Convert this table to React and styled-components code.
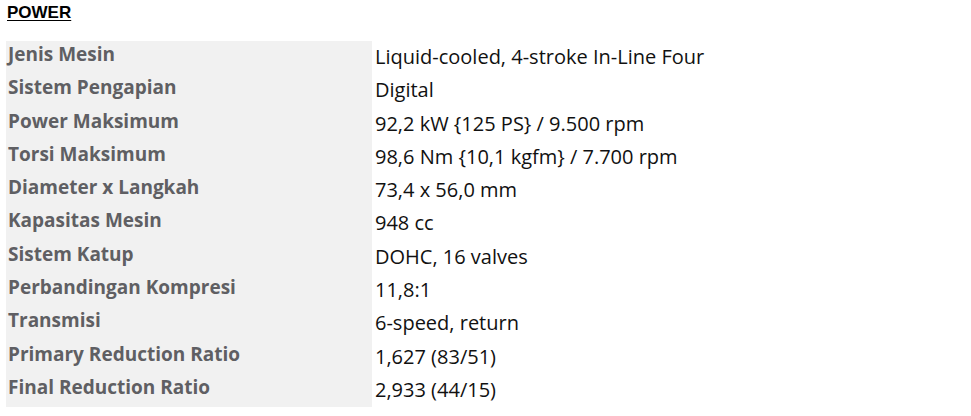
import styled, { createGlobalStyle } from "styled-components";

const GlobalStyle = createGlobalStyle`
  body {
    margin: 0;
    background: #ffffff;
  }
`;

const Page = styled.div`
  padding: 3px 6px 0;
`;

const Heading = styled.h3`
  margin: 0 0 0 1px;
  font-family: "Liberation Sans", Arial, sans-serif;
  font-weight: 700;
  font-size: 17px;
  line-height: 19px;
  color: #000;
  text-decoration: underline;
  text-underline-offset: 2px;
`;

const Table = styled.div`
  display: flex;
  margin-top: 19px;
`;

const LabelColumn = styled.div`
  width: 366px;
  background-color: #f1f1f1;
`;

const ValueColumn = styled.div`
  padding-left: 3px;
`;

const Label = styled.div`
  height: 33.3px;
  padding-left: 2px;
  font-family: "Open Sans", sans-serif;
  font-weight: 700;
  font-size: 19px;
  line-height: 26px;
  color: #5f5f63;
  white-space: nowrap;
`;

const Value = styled.div`
  height: 33.3px;
  font-family: "Open Sans", sans-serif;
  font-size: 20px;
  line-height: 32px;
  color: #111;
  white-space: nowrap;
`;

const specs = [
  ["Jenis Mesin", "Liquid-cooled, 4-stroke In-Line Four"],
  ["Sistem Pengapian", "Digital"],
  ["Power Maksimum", "92,2 kW {125 PS} / 9.500 rpm"],
  ["Torsi Maksimum", "98,6 Nm {10,1 kgfm} / 7.700 rpm"],
  ["Diameter x Langkah", "73,4 x 56,0 mm"],
  ["Kapasitas Mesin", "948 cc"],
  ["Sistem Katup", "DOHC, 16 valves"],
  ["Perbandingan Kompresi", "11,8:1"],
  ["Transmisi", "6-speed, return"],
  ["Primary Reduction Ratio", "1,627 (83/51)"],
  ["Final Reduction Ratio", "2,933 (44/15)"],
];

export default function App() {
  return (
    <Page>
      <GlobalStyle />
      <Heading>POWER</Heading>
      <Table>
        <LabelColumn>
          {specs.map(([label]) => (
            <Label key={label}>{label}</Label>
          ))}
        </LabelColumn>
        <ValueColumn>
          {specs.map(([label, value]) => (
            <Value key={label}>{value}</Value>
          ))}
        </ValueColumn>
      </Table>
    </Page>
  );
}
